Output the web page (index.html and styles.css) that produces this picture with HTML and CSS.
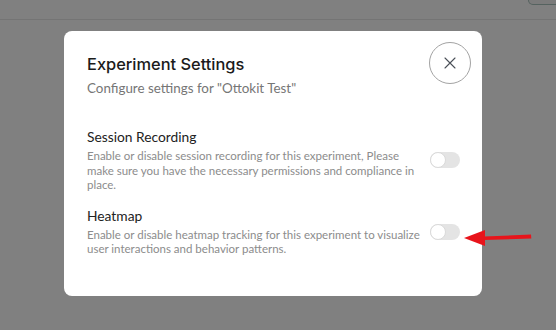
FILE: index.html
```html
<!DOCTYPE html>
<html>
<head>
<meta charset="utf-8">
<link rel="stylesheet" href="styles.css">
</head>
<body>
<div class="page-header">
  <div class="header-btn"></div>
</div>
<div class="modal">
  <div class="modal-head">
    <div class="head-text">
      <h2 class="title">Experiment Settings</h2>
      <p class="subtitle">Configure settings for "Ottokit Test"</p>
    </div>
    <button class="close" aria-label="Close">
      <svg width="12" height="12" viewBox="0 0 12 12"><path d="M1 1L11 11M11 1L1 11" stroke="#4a4f57" stroke-width="1.1" stroke-linecap="round"/></svg>
    </button>
  </div>
  <div class="setting">
    <div class="setting-text">
      <div class="setting-title">Session Recording</div>
      <div class="setting-desc">Enable or disable session recording for this experiment, Please make sure you have the necessary permissions and compliance in place.</div>
    </div>
    <div class="toggle"><span class="knob"></span></div>
  </div>
  <div class="setting second">
    <div class="setting-text">
      <div class="setting-title">Heatmap</div>
      <div class="setting-desc">Enable or disable heatmap tracking for this experiment to visualize user interactions and behavior patterns.</div>
    </div>
    <div class="toggle"><span class="knob"></span></div>
  </div>
</div>
<svg class="arrow" width="80" height="30" viewBox="0 0 80 30">
  <path d="M20 13.5 L67 11.5 L67.3 15.5 L20 17 Z" fill="#e8141b"/>
  <path d="M0 15 L21 7 L21 23 Z" fill="#e8141b"/>
</svg>
</body>
</html>
```
FILE: styles.css
```css
* { box-sizing: border-box; }
html, body { margin: 0; padding: 0; }
body {
  width: 556px;
  height: 330px;
  background: #808080;
  font-family: Lato, "Noto Sans", sans-serif;
  position: relative;
  overflow: hidden;
}
.page-header {
  height: 20px;
  border-bottom: 1px solid #747474;
  display: flex;
  justify-content: flex-end;
}
.header-btn {
  width: 40px;
  height: 5px;
  margin-right: -12px;
  border: 1px solid #55625f;
  border-top: none;
  border-radius: 0 0 0 5px;
  background: #7b7b7b;
}
.modal {
  margin: 11px 0 0 64px;
  width: 418px;
  height: 265px;
  background: #fff;
  border-radius: 8px;
  padding: 11px 22px 0 23px;
}
.modal-head {
  display: flex;
  justify-content: space-between;
  margin-right: -11px;
}
.head-text { padding-top: 11px; }
.title {
  margin: 0;
  font-family: Inter, "Noto Sans", sans-serif;
  font-size: 16.4px;
  font-weight: 500;
  color: #1b1b1b;
  line-height: 22px;
}
.subtitle {
  margin: 4px 0 0;
  font-size: 13.4px;
  color: #767676;
  line-height: 18px;
}
.close {
  width: 42px;
  height: 42px;
  border-radius: 50%;
  border: 1.5px solid #a3a3a3;
  background: #fff;
  display: flex;
  align-items: center;
  justify-content: center;
  padding: 0;
}
.setting {
  display: flex;
  align-items: center;
  gap: 6px;
  margin-top: 31px;
}
.setting.second { margin-top: 14px; }
.setting-text { width: 338px; }
.setting-title {
  font-size: 13.8px;
  color: #222;
  line-height: 18px;
}
.setting-desc {
  margin-top: 3px;
  font-size: 11.5px;
  color: #8c8c8c;
  line-height: 14.5px;
}
.toggle {
  width: 30px;
  height: 16px;
  border-radius: 8px;
  background: #e4e4e4;
  position: relative;
  flex: none;
}
.knob {
  position: absolute;
  left: 0;
  top: 0;
  width: 16px;
  height: 16px;
  border-radius: 50%;
  background: #fff;
  border: 1px solid #dadada;
}
.arrow {
  position: absolute;
  left: 464px;
  top: 223px;
}
```
